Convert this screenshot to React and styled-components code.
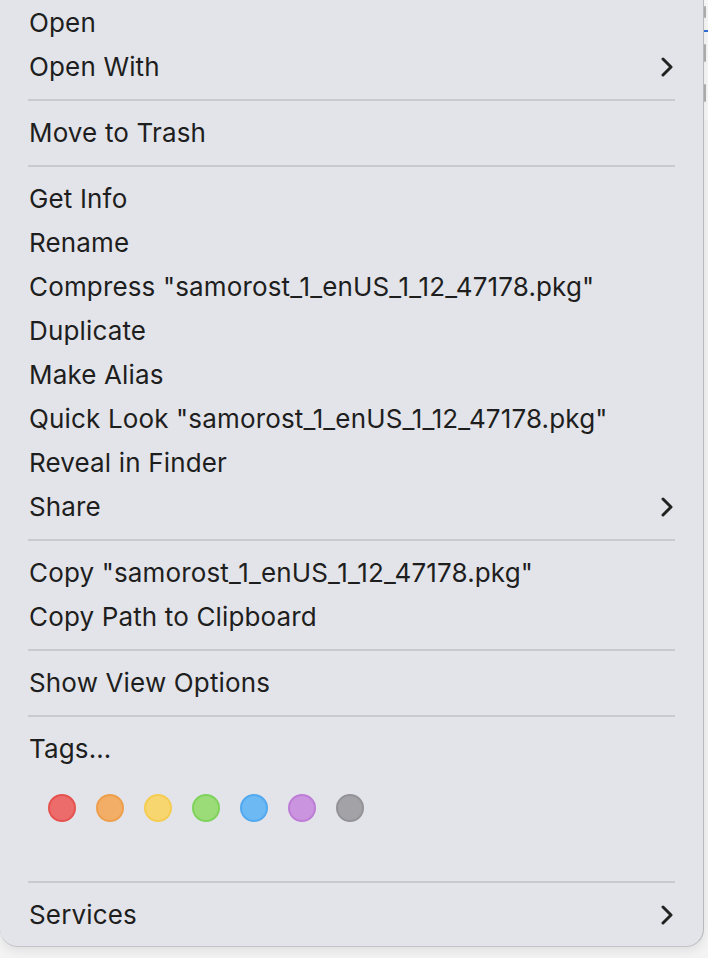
import React from "react";
import styled, { createGlobalStyle } from "styled-components";

const GlobalStyle = createGlobalStyle`
  html, body {
    margin: 0;
    padding: 0;
    background: #f3f3f3;
  }
  body {
    font-family: Inter, "Noto Sans", "Liberation Sans", sans-serif;
    -webkit-font-smoothing: antialiased;
  }
`;

const tags = [
  { fill: "#ec6b6b", ring: "#e5534f" },
  { fill: "#f2ad66", ring: "#ee9f4c" },
  { fill: "#f8d66f", ring: "#f5cc52" },
  { fill: "#9bdc78", ring: "#7fd25b" },
  { fill: "#6cb9f4", ring: "#52a9ef" },
  { fill: "#cb94df", ring: "#bd7dd6" },
  { fill: "#a3a3a7", ring: "#939397" },
];

const Chevron = () => (
  <svg width="12" height="20" viewBox="0 0 12 20">
    <path d="M2 2 L10 10 L2 18" fill="none" stroke="#222" strokeWidth="3" strokeLinecap="round" strokeLinejoin="round" />
  </svg>
);

const Item = ({ label, sub }) => (
  <Row>
    <Label>{label}</Label>
    {sub && <Chevron />}
  </Row>
);

const App = () => {
  return (
    <>
      <GlobalStyle />
      <Page>
        <Menu>
          <Item label="Open" />
          <Item label="Open With" sub />
          <Separator />
          <Item label="Move to Trash" />
          <Separator />
          <Item label="Get Info" />
          <Item label="Rename" />
          <Item label={'Compress "samorost_1_enUS_1_12_47178.pkg"'} />
          <Item label="Duplicate" />
          <Item label="Make Alias" />
          <Item label={'Quick Look "samorost_1_enUS_1_12_47178.pkg"'} />
          <Item label="Reveal in Finder" />
          <Item label="Share" sub />
          <Separator />
          <Item label={'Copy "samorost_1_enUS_1_12_47178.pkg"'} />
          <Item label="Copy Path to Clipboard" />
          <Separator />
          <Item label="Show View Options" />
          <Separator />
          <Item label="Tags…" />
          <TagRow>
            {tags.map((t, i) => (
              <Dot key={i} $fill={t.fill} $ring={t.ring} />
            ))}
          </TagRow>
          <Separator />
          <Item label="Services" sub />
        </Menu>
        <Strip>
          <Fragment $top={6} $h={12} />
          <BlueLine />
          <Fragment $top={12} $h={18} />
          <Fragment $top={22} $h={18} />
        </Strip>
      </Page>
    </>
  );
};

export default App;

const Page = styled.div`
  display: flex;
  align-items: flex-start;
  width: 708px;
  height: 958px;
  overflow: hidden;
`;

const Menu = styled.div`
  width: 704px;
  flex-shrink: 0;
  box-sizing: border-box;
  padding: 1px 0 9px;
  background: #e3e4e9;
  border-right: 1px solid #b9b9bd;
  border-bottom: 1px solid #c4c4c8;
  border-radius: 0 0 18px 18px;
  box-shadow: 0 4px 10px rgba(0, 0, 0, 0.08);
  position: relative;
  z-index: 1;
`;

const Row = styled.div`
  height: 44px;
  display: flex;
  align-items: center;
  justify-content: space-between;
  padding: 0 30px 0 29px;
`;

const Label = styled.span`
  font-size: 26px;
  line-height: 30px;
  color: #1e1e1e;
  white-space: nowrap;
  letter-spacing: 0.15px;
`;

const Separator = styled.div`
  height: 22px;
  display: flex;
  align-items: center;
  padding: 0 28px;
  &::after {
    content: "";
    flex: 1;
    height: 2px;
    background: #cacace;
  }
`;

const TagRow = styled.div`
  height: 100px;
  box-sizing: border-box;
  padding: 23px 0 0 48px;
  display: flex;
  gap: 20px;
`;

const Dot = styled.span`
  width: 28px;
  height: 28px;
  box-sizing: border-box;
  border-radius: 50%;
  background: ${(p) => p.$fill};
  border: 2px solid ${(p) => p.$ring};
`;

const Strip = styled.div`
  width: 4px;
  height: 120px;
  display: flex;
  flex-direction: column;
  background: #f7f7f7;
  overflow: hidden;
`;

const Fragment = styled.div`
  width: 2px;
  height: ${(p) => p.$h}px;
  margin-top: ${(p) => p.$top}px;
  background: #b0b0b0;
  border-radius: 1px;
`;

const BlueLine = styled.div`
  height: 2px;
  background: #2f6fd6;
  margin-top: 12px;
`;
